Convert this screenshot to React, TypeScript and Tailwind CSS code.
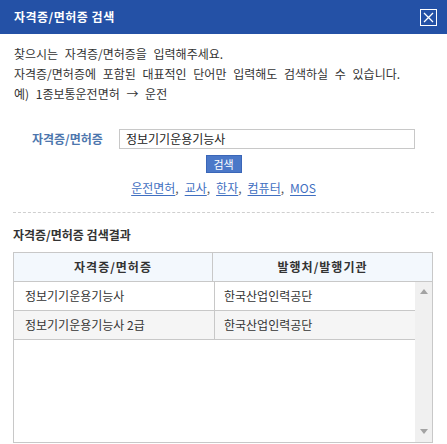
import React from "react";

const font = { fontFamily: '"Noto Sans CJK KR", "Noto Sans", sans-serif' };

export default function App() {
  const links = ["운전면허", "교사", "한자", "컴퓨터", "MOS"];
  const rows = [
    { name: "정보기기운용기능사", org: "한국산업인력공단", bg: "bg-white" },
    { name: "정보기기운용기능사 2급", org: "한국산업인력공단", bg: "bg-[#f5f5f5]" },
  ];
  return (
    <div
      className="w-[447px] h-[444px] bg-white overflow-hidden flex flex-col text-[#333]"
      style={font}
    >
      <div className="h-[34px] shrink-0 bg-[#2451a6] flex items-center justify-between pl-[14px] pr-[10px]">
        <span className="text-white text-[12px] font-bold tracking-[0.5px]">자격증/면허증 검색</span>
        <div className="w-[17px] h-[17px] border border-white flex items-center justify-center">
          <svg width="11" height="11" viewBox="0 0 11 11">
            <path d="M1 1 L10 10 M10 1 L1 10" stroke="white" strokeWidth="1.3" fill="none" />
          </svg>
        </div>
      </div>

      <div className="flex flex-col px-[13px]">
        <div className="pt-[10px] pl-[1px] text-[12px] leading-[20px] text-[#333] [word-spacing:4px]">
          <p>찾으시는 자격증/면허증을 입력해주세요.</p>
          <p>자격증/면허증에 포함된 대표적인 단어만 입력해도 검색하실 수 있습니다.</p>
          <p>예) 1종보통운전면허 → 운전</p>
        </div>

        <div className="mt-[25px] flex items-center">
          <div className="w-[106px] pl-[19px] text-[12px] font-bold text-[#4d76ad]">
            자격증/면허증
          </div>
          <div className="w-[296px] h-[20px] border border-[#c8c8c8] flex items-center px-[6px] text-[12px] text-[#222] leading-none">
            정보기기운용기능사
          </div>
        </div>

        <div className="mt-[6px] flex justify-center">
          <div className="w-[36px] h-[18px] bg-[#4b78c8] border border-[#3a66b8] flex items-center justify-center text-white text-[11px] leading-none">
            검색
          </div>
        </div>

        <div className="mt-[5px] flex justify-center text-[12px] leading-[20px]">
          {links.map((l, i) => (
            <span key={l} className="flex">
              <span className="text-[#3f6fc1] underline underline-offset-2">{l}</span>
              {i < links.length - 1 && <span className="text-[#555] mr-[6px]">,</span>}
            </span>
          ))}
        </div>

        <div className="mt-[14px] border-t border-dashed border-[#cfcfcf]" />

        <div className="mt-[12px] text-[12px] leading-[20px] font-bold text-[#333]">
          자격증/면허증 검색결과
        </div>

        <div className="mt-[7px] w-[420px] h-[191px] border border-[#c8c8c8] flex flex-col">
          <div className="h-[29px] shrink-0 bg-[#f3f8fd] border-b border-[#c8c8c8] flex text-[12px] font-bold text-[#333]">
            <div className="w-[199px] border-r border-[#c8c8c8] flex items-center justify-center tracking-[1px]">
              자격증/면허증
            </div>
            <div className="flex-1 flex items-center justify-center tracking-[1px]">발행처/발행기관</div>
          </div>
          <div className="flex flex-1">
            <div className="w-[401px] flex flex-col">
              {rows.map((r) => (
                <div
                  key={r.name}
                  className={`h-[29px] flex border-b border-[#c8c8c8] text-[12px] text-[#333] ${r.bg}`}
                >
                  <div className="w-[201px] border-r border-[#c8c8c8] flex items-center pl-[11px]">{r.name}</div>
                  <div className="flex-1 flex items-center pl-[9px]">{r.org}</div>
                </div>
              ))}
            </div>
            <div className="w-[17px] bg-[#f0f0f0] flex flex-col items-center justify-between pt-[7px] pb-[8px]">
              <svg width="8" height="5" viewBox="0 0 8 5">
                <path d="M4 0 L8 5 L0 5 Z" fill="#a3a3a3" />
              </svg>
              <svg width="8" height="5" viewBox="0 0 8 5">
                <path d="M0 0 L8 0 L4 5 Z" fill="#a3a3a3" />
              </svg>
            </div>
          </div>
        </div>
      </div>
    </div>
  );
}
